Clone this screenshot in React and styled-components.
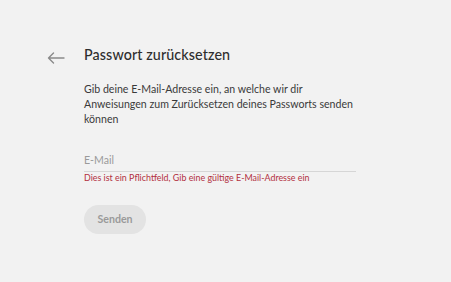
import React from 'react'
import styled, { createGlobalStyle } from 'styled-components'

const Global = createGlobalStyle`
	html, body {
		margin: 0;
		padding: 0;
		background: #f2f2f2;
	}
	body {
		font-family: Lato, "Open Sans", sans-serif;
	}
`

const Page = styled.div`
	width: 451px;
	height: 282px;
	background: #f2f2f2;
	display: grid;
	grid-template-columns: 84px 272px;
	padding-top: 45px;
	box-sizing: border-box;
`

const Back = styled.button`
	justify-self: start;
	margin-left: 46px;
	margin-top: 5px;
	width: 20px;
	height: 16px;
	padding: 0;
	border: none;
	background: none;
	color: #8a8a8a;
	display: flex;
	align-items: center;
	justify-content: center;
	cursor: pointer;
`

const Content = styled.div`
	display: flex;
	flex-direction: column;
`

const Title = styled.h1`
	margin: 0;
	font-size: 14.3px;
	font-weight: 500;
	color: #2e2e2e;
	line-height: 20px;
	letter-spacing: 0.1px;
`

const Text = styled.p`
	margin: 17px 0 0;
	font-size: 10.6px;
	line-height: 14.8px;
	color: #3a3a3a;
`

const Field = styled.div`
	margin-top: 27.5px;
	display: flex;
	flex-direction: column;
`

const Input = styled.input`
	border: none;
	border-bottom: 1px solid #d6d6d6;
	background: transparent;
	padding: 0 0 5px;
	font-family: inherit;
	font-size: 10.6px;
	color: #333;
	outline: none;
	&::placeholder {
		color: #9a9a9a;
	}
`

const Error = styled.span`
	margin-top: 0;
	font-size: 8.9px;
	color: #b3303f;
	line-height: 12px;
`

const Button = styled.button`
	align-self: flex-start;
	margin-top: 21px;
	width: 62px;
	height: 29px;
	border: none;
	border-radius: 15px;
	background: #e3e3e3;
	color: #9a9a9a;
	font-family: inherit;
	font-weight: 700;
	font-size: 10.6px;
`

const ArrowIcon = () => (
	<svg width="18" height="12" viewBox="0 0 18 12" fill="none" stroke="currentColor" strokeWidth="1.4" strokeLinecap="round" strokeLinejoin="round">
		<path d="M17 6H1.5M6.5 1L1.5 6l5 5" />
	</svg>
)

const App = () => (
	<>
		<Global />
		<Page>
			<Back aria-label="Zurück">
				<ArrowIcon />
			</Back>
			<Content>
				<Title>Passwort zurücksetzen</Title>
				<Text>
					Gib deine E-Mail-Adresse ein, an welche wir dir Anweisungen zum Zurücksetzen deines Passworts senden können
				</Text>
				<Field>
					<Input placeholder="E-Mail" />
					<Error>Dies ist ein Pflichtfeld, Gib eine gültige E-Mail-Adresse ein</Error>
				</Field>
				<Button>Senden</Button>
			</Content>
		</Page>
	</>
)

export default App
